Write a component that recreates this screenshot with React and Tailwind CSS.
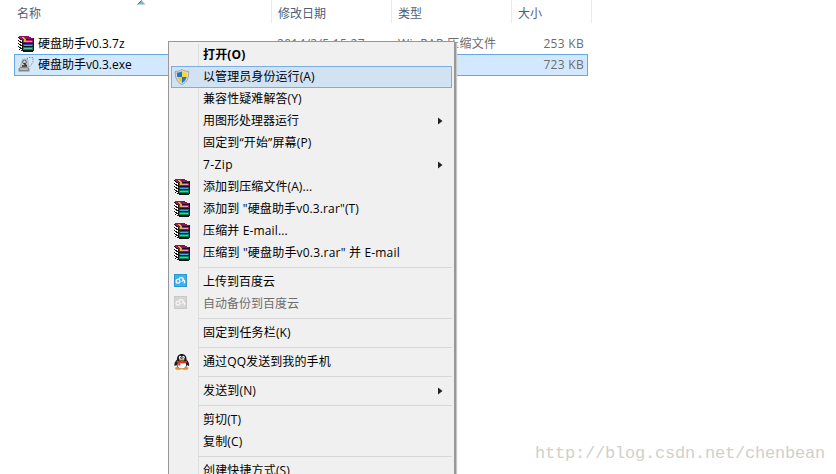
import React from 'react';

const columns = [
  { label: '名称', className: 'w-[255px]' },
  { label: '修改日期', className: 'w-[120px]' },
  { label: '类型', className: 'w-[120px]' },
  { label: '大小', className: 'w-[80px]' },
];

const menuItems = [
  { label: '打开(O)', bold: true },
  { label: '以管理员身份运行(A)', icon: 'shield', active: true, tracking: 'tracking-[0.08px]' },
  { label: '兼容性疑难解答(Y)', tracking: 'tracking-[0.08px]' },
  { label: '用图形处理器运行', submenu: true, tracking: 'tracking-normal' },
  { label: '固定到“开始”屏幕(P)' },
  { label: '7-Zip', submenu: true, tracking: 'tracking-[0.4px]' },
  { label: '添加到压缩文件(A)...', icon: 'rar', tracking: 'tracking-[0.08px]' },
  { label: '添加到 "硬盘助手v0.3.rar"(T)', icon: 'rar' },
  { label: '压缩并 E-mail...', icon: 'rar' },
  { label: '压缩到 "硬盘助手v0.3.rar" 并 E-mail', icon: 'rar', tracking: 'tracking-[0.19px]' },
  { separator: true },
  { label: '上传到百度云', icon: 'cloud', tracking: 'tracking-normal' },
  { label: '自动备份到百度云', icon: 'cloudOff', disabled: true, tracking: 'tracking-normal' },
  { separator: true },
  { label: '固定到任务栏(K)' },
  { separator: true },
  { label: '通过QQ发送到我的手机', icon: 'qq', tracking: 'tracking-[0.1px]' },
  { separator: true },
  { label: '发送到(N)', submenu: true },
  { separator: true },
  { label: '剪切(T)', tracking: 'tracking-[0.1px]' },
  { label: '复制(C)' },
  { separator: true },
  { label: '创建快捷方式(S)' },
];

// Stack of three books, one character per pixel
const rarPixels = [
  '.pppppppppp.....',
  'kpmpyympppppp...',
  'wkpmpyympppppppk',
  'wwkkppyykkkkkkkk',
  'kwwwkmyymmmmmmpk',
  'wkkwkmyyllllllmk',
  'wwkkkppppppppppk',
  'kwwwkkkkkkkkkkkk',
  'wkkwkbbbbbbbbbbk',
  'wwkkkbccccccccbk',
  'kwwwkkkkkkkkkkkk',
  'wkkwkggggggggggk',
  'wwkkkghhhhhhhhgk',
  '.kwwkggggggggggk',
  '...kkkkkkkkkkkkk',
  '.....kkkkkkkkkk.',
];

const rarPalette = {
  k: '#151515',
  w: '#ffffff',
  p: '#8b1458',
  m: '#c21b78',
  l: '#f293c4',
  y: '#cdbb30',
  b: '#0d5aa0',
  c: '#43a9ea',
  g: '#08875a',
  h: '#4dcca4',
};

const RarIcon = () => (
  <svg width="16" height="16" viewBox="0 0 16 16" shapeRendering="crispEdges">
    {rarPixels.map((row, y) =>
      row.split('').map((key, x) =>
        key === '.' ? null : <rect key={`${x}-${y}`} x={x} y={y} width="1" height="1" fill={rarPalette[key]} />
      )
    )}
  </svg>
);

const ShieldIcon = () => (
  <svg width="16" height="16" viewBox="0 0 16 16">
    <path d="M8 .5C6 2 4 2.400 1.400 2.300.9 8.500 2.800 13 8 15.600c5.200-2.600 7.100-7.100 6.600-13.300C12 2.400 10 2 8 .5z" fill="#dcdcd4" stroke="#8b9299" strokeWidth=".8" />
    <path d="M8 2.200C6.300 3.300 4.800 3.600 2.900 3.600c-.1 1.600 0 3 .4 4.400H8z" fill="#1979cf" />
    <path d="M8 2.200c1.700 1.100 3.200 1.400 5.100 1.400.1 1.600 0 3-.4 4.400H8z" fill="#fbd535" />
    <path d="M3.300 8c.7 2.600 2.200 4.600 4.700 6V8z" fill="#f8c91d" />
    <path d="M12.700 8c-.7 2.600-2.200 4.600-4.700 6V8z" fill="#1979cf" />
  </svg>
);

const CloudIcon = ({ disabled }) => (
  <svg className="mb-[3px]" width="13" height="13" viewBox="0 0 13 13">
    <path d="M0 0h13v13H0z" fill={disabled ? '#c9c9c9' : '#2b97da'} />
    <path d="M1 1h11v11H1z" fill={disabled ? '#d5d5d5' : '#42b0ed'} />
    <g fill="none" stroke={disabled ? '#f6f6f6' : '#fff'} strokeWidth="1.200">
      <circle cx="4" cy="7.300" r="1.900" />
      <path d="M5 5.500C5.500 2.800 9.300 3 9.200 5.700c0 1.200-.8 1.800-1.700 1.800M9.300 6.200c1.700.3 1.900 2.400.5 2.900" />
    </g>
  </svg>
);

const QQIcon = () => (
  <svg width="16" height="16" viewBox="0 0 16 16">
    <ellipse cx="4.500" cy="14.300" rx="3.300" ry="1.500" fill="#ed8a18" />
    <ellipse cx="11" cy="14.300" rx="3.300" ry="1.500" fill="#ed8a18" />
    <path d="M7.800 0C4.500 0 2.900 2.300 3 5.600 1.200 7.500 0 9.800.5 11.700c.5.600 1.200-.2 1.800-1C3 13.200 5.200 14.500 7.800 14.500s4.800-1.300 5.400-3.800c.6.800 1.300 1.600 1.800 1 .5-1.900-.7-4.200-2.500-6.100C12.600 2.300 11.100 0 7.800 0z" fill="#17191c" />
    <ellipse cx="7.800" cy="11" rx="4.300" ry="3.400" fill="#fff" />
    <ellipse cx="6.200" cy="3.400" rx="1.300" ry="1.600" fill="#fff" />
    <ellipse cx="9.400" cy="3.400" rx="1.300" ry="1.600" fill="#fff" />
    <path d="M6.300 3h.8v1.200h-.8zM8.600 3h.8v1.200h-.8z" fill="#111" />
    <ellipse cx="7.800" cy="5.700" rx="2.900" ry=".9" fill="#f7a61e" />
    <path d="M2.800 6.500c2.900 1.500 7.100 1.500 10 0l.3 1.700c-2.100 1.200-4.800 1.400-6.700 1.100l-.2 2.200H4.100l.2-2.600-1.700-.7z" fill="#df2f2a" />
  </svg>
);

const DriveIcon = () => (
  <svg width="16" height="16" viewBox="0 0 16 16">
    <path d="M4.500 2h5l1.500 8H2z" fill="#c4c6c8" stroke="#a9abad" strokeWidth=".6" />
    <circle cx="6.500" cy="5" r="1.800" fill="#e6e6e6" stroke="#5a5d60" />
    <path d="M6 6l2.500 3M4 9h5" stroke="#333" strokeWidth="1.400" />
    <path d="M.5 11.500l2-1.500h7l2 1.500v3H.5z" fill="#85888b" />
    <path d="M2 12h8" stroke="#e6e6e6" />
    <path d="M9 1.500l2-1h4v4l-2 4-2 2" fill="none" stroke="#686868" strokeDasharray="1 1.500" />
  </svg>
);

const icons = {
  rar: <RarIcon />,
  shield: <ShieldIcon />,
  cloud: <CloudIcon />,
  cloudOff: <CloudIcon disabled />,
  qq: <QQIcon />,
};

const MenuItem = ({ item }) => {
  if (item.separator) {
    return (
      <div className="h-[7px] pt-[3px] pl-[28px]">
        <div className="h-px bg-[#d7d7d7]"></div>
      </div>
    );
  }
  return (
    <div className={`flex h-[22px] shrink-0 items-center border ${item.active ? 'border-[#78aee5] bg-[#d1e2f2]' : 'border-transparent'}`}>
      <div className="flex w-[31px] shrink-0 items-center pl-[2px]">{icons[item.icon]}</div>
      <span className={`grow whitespace-pre ${item.tracking || 'tracking-[0.15px]'} ${item.bold ? 'font-bold' : ''} ${item.disabled ? 'text-[#6d6d6d]' : 'text-black'}`}>{item.label}</span>
      {item.submenu && (
        <svg className="mr-[8px]" width="5" height="8" viewBox="0 0 5 8">
          <path d="M0 0.500L4.500 4L0 7.500z" fill="#222" />
        </svg>
      )}
    </div>
  );
};

const App = () => {
  return (
    <div className="relative h-[474px] w-[836px] overflow-hidden bg-white font-['Open_Sans','Noto_Sans_CJK_SC',sans-serif] text-[12px] leading-[20px] text-[#6d6d6d]">
      {/* Column headers */}
      <div className="flex h-[33px] pl-[17px] text-[#4c607a]">
        {columns.map((column) => (
          <div key={column.label} className={`flex h-[23px] items-center border-r border-[#e3edf7] pt-[5px] not-first:pl-[6px] ${column.className}`}>
            {column.label}
          </div>
        ))}
      </div>
      <svg className="absolute top-0 left-[137px]" width="9" height="5" viewBox="0 0 9 5">
        <path d="M0.500 4.500L4.500 0.500L8.500 4.500z" fill="#79b5cf" />
        <path d="M0.500 4.500L4.500 0.500" stroke="#3f7391" />
      </svg>

      {/* Files */}
      <div className="ml-[14px] w-[574px]">
        <div className="flex h-[21px] items-center pr-[4px] pl-[4px]">
          <RarIcon />
          <span className="w-[240px] pl-[4px] text-black">硬盘助手v0.3.7z</span>
          <span className="w-[120px] pl-[3px] tracking-[0.3px]">2014/2/5 15:27</span>
          <span className="pl-[4px] tracking-[0.3px]">WinRAR 压缩文件</span>
          <span className="ml-auto tracking-[0.3px]">253 KB</span>
        </div>
        <div className="flex h-[22px] items-center border border-[#66a7e8] bg-[#d1e8ff] pr-[3px] pl-[3px]">
          <DriveIcon />
          <span className="grow pl-[4px] text-black">硬盘助手v0.3.exe</span>
          <span className="tracking-[0.3px]">723 KB</span>
        </div>
      </div>

      {/* Context menu */}
      <div className="absolute top-[41px] left-[168px] h-[440px] w-[287px] border border-[#979797] bg-[#f0f0f0] px-[2px] pt-[2px] shadow-[1px_1px_0_#999,2px_2px_1px_#c8c8c8]">
        <div className="absolute top-[2px] bottom-0 left-[29px] w-px bg-[#dedede]"></div>
        <div className="relative flex flex-col">
          {menuItems.map((item, index) => (
            <MenuItem key={index} item={item} />
          ))}
        </div>
      </div>

      <div className="absolute top-[442px] left-[535px] font-['Liberation_Mono',monospace] text-[17px] leading-[24px] tracking-[-0.200px] whitespace-nowrap text-[#d0d0cb]">
        http://blog.csdn.net/chenbean
      </div>
    </div>
  );
};

export default App;
